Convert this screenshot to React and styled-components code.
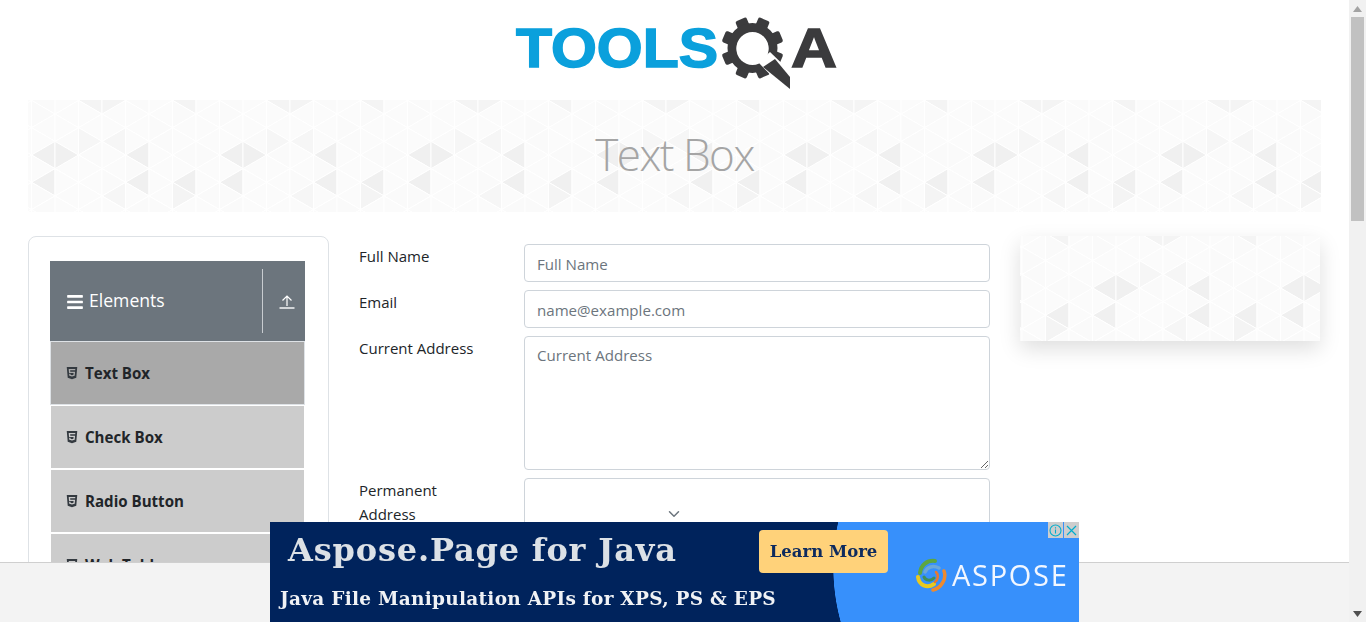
import React from "react";
import styled, { createGlobalStyle } from "styled-components";
import { FaHtml5, FaBars } from "react-icons/fa";
import { FiChevronDown } from "react-icons/fi";

const buildTile = () => {
  const W = 23.5, S = 27.3;
  const cx = (k) => 3.5 + W * k;
  const dark = { "0L55": 2, "1R55": 2, "2R41": 1, "3L41": 1, "4L55": 2, "0L82": 2, "4L82": 2, "6L82": 2, "6R96": 1.5, "3L96": 1, "6L0": 1.5, "2L0": 1.5, "3R0": 1.5 };
  const shade = { 0: "#fbfbfb", 1: "#f6f6f6", 1.5: "#f4f4f4", 2: "#f0f0f0" };
  let out = "";
  for (let k = -1; k < 8; k++) {
    const m = ((k % 8) + 8) % 8;
    const even = ((k % 2) + 2) % 2 === 0;
    for (let n = -1; n < 6; n++) {
      const yA = (even ? 0.4 : 14) + S * n;
      const yB = (even ? 14 : 0.4) + S * n;
      const keyL = `${m}L${Math.round(yA)}`;
      const keyR = `${m}R${Math.round(yB)}`;
      const tone = (m * 3 + n * 5) % 4 === 0 ? "#fafafa" : shade[0];
      const fL = dark[keyL] ? shade[dark[keyL]] : tone;
      const fR = dark[keyR] ? shade[dark[keyR]] : ((m + n) % 3 === 0 ? "#fafafa" : shade[0]);
      out += `<polygon points="${cx(k)},${yA} ${cx(k + 1)},${yA - S / 2} ${cx(k + 1)},${yA + S / 2}" fill="${fL}" stroke="#fff" stroke-width="1"/>`;
      out += `<polygon points="${cx(k + 1)},${yB} ${cx(k)},${yB - S / 2} ${cx(k)},${yB + S / 2}" fill="${fR}" stroke="#fff" stroke-width="1"/>`;
    }
  }
  return `data:image/svg+xml,${encodeURIComponent(`<svg xmlns="http://www.w3.org/2000/svg" width="188" height="112" viewBox="0 0 188 112">${out}</svg>`)}`;
};
const tile = buildTile();

const Global = createGlobalStyle`
  html, body { margin: 0; padding: 0; height: 100%; overflow: hidden; background: #fff; }
  body { font-family: "Open Sans", "Liberation Sans", sans-serif; color: #212529; }
  * { box-sizing: border-box; }
`;

const Page = styled.div`
  width: 1349px;
  height: 622px;
  overflow: hidden;
`;
const LogoRow = styled.header`
  height: 100px;
  display: flex;
  justify-content: center;
`;
const Hero = styled.div`
  height: 112px;
  margin: 0 28px;
  background: #fff url("${tile}") repeat-x 0 0;
  display: flex;
  align-items: center;
  justify-content: center;
  padding-bottom: 5px;
`;
const HeroTitle = styled.h1`
  margin: 0;
  font-size: 44px;
  font-weight: 300;
  letter-spacing: -1.5px;
  color: #a5a5a5;
  line-height: 1;
`;
const Main = styled.main`
  margin: 24px 28px 0;
  display: flex;
  gap: 30px;
  align-items: flex-start;
`;
const SideCard = styled.aside`
  width: 301px;
  flex: none;
  height: 500px;
  padding: 24px 23px 24px 21px;
  border: 1px solid #dee2e6;
  border-radius: 8px;
`;
const GroupHeader = styled.div`
  height: 80px;
  background: #6c757d;
  color: #fff;
  display: flex;
  align-items: center;
  padding: 0 10px 0 16px;
`;
const GroupTitle = styled.div`
  flex: 1;
  display: flex;
  align-items: center;
  gap: 5px;
  font-size: 17.6px;
  margin-top: -2px;
  svg { margin-top: 3px; }
`;
const Divider = styled.div`
  width: 1px;
  height: 64px;
  background: #c8ccd0;
  margin-right: 16px;
  margin-top: -1px;
`;
const MenuItem = styled.div`
  height: ${(p) => (p.$active ? "64px" : "62px")};
  margin: ${(p) => (p.$active ? "0 0 1px" : "0 1px 2px")};
  background: ${(p) => (p.$active ? "#a9a9a9" : "#cccccc")};
  border: ${(p) => (p.$active ? "1px solid #dee2e6" : "none")};
  display: flex;
  align-items: center;
  gap: 6px;
  padding-left: 14px;
  font-size: 15.1px;
  font-weight: 700;
  color: #212529;
  svg { color: #343a40; }
`;
const FormCol = styled.form`
  width: 631px;
  flex: none;
  padding-top: 8px;
  display: flex;
  flex-direction: column;
  gap: 8px;
`;
const Row = styled.div`
  display: flex;
`;
const Label = styled.label`
  width: 165px;
  flex: none;
  padding-right: 30px;
  font-size: 15px;
  line-height: 24px;
`;
const Input = styled.input`
  flex: 1;
  height: 38px;
  padding: 7px 12px 5px;
  border: 1px solid #ced4da;
  border-radius: 4px;
  font: 15.1px "Open Sans", sans-serif;
  &::placeholder { color: #6c757d; opacity: 1; }
`;
const TextArea = styled.textarea`
  flex: 1;
  height: 134px;
  padding: 6px 12px;
  border: 1px solid #ced4da;
  border-radius: 4px;
  font: 15.1px/24px "Open Sans", sans-serif;
  &::placeholder { color: #6c757d; opacity: 1; }
`;
const SelectBox = styled.div`
  flex: 1;
  height: 72px;
  padding-left: 140px;
  border: 1px solid #ced4da;
  border-radius: 4px;
  display: flex;
  align-items: center;
  color: #6c757d;
`;
const SideAd = styled.div`
  width: 300px;
  height: 105px;
  flex: none;
  background: #fff url("${tile}") repeat-x 68.7px -3px;
  box-shadow: 0 8px 20px rgba(0, 0, 0, 0.13);
`;
const BottomBar = styled.div`
  position: fixed;
  left: 0;
  right: 0;
  bottom: 0;
  height: 60px;
  background: #f3f3f3;
  border-top: 1px solid #cfcfcf;
`;
const AdBanner = styled.div`
  position: fixed;
  left: 270px;
  bottom: 0;
  width: 809px;
  height: 100px;
  display: flex;
  background: radial-gradient(circle 208px at 771px 45px, #3790fb 99.7%, #00235c 100%);
`;
const AdCopy = styled.div`
  width: 489px;
  flex: none;
  font-family: "DejaVu Serif", "Liberation Serif", serif;
  font-weight: 700;
`;
const AdHeadline = styled.div`
  margin: 7px 0 0 18px;
  font-size: 32px;
  line-height: 42px;
  letter-spacing: 0.83px;
  color: #dce1e6;
  white-space: nowrap;
`;
const AdSub = styled.div`
  margin: 14px 0 0 10px;
  font-size: 18.5px;
  line-height: 28px;
  letter-spacing: 0.27px;
  color: #f0f2f5;
  white-space: nowrap;
`;
const AdButton = styled.div`
  width: 129px;
  height: 43px;
  margin-top: 8px;
  background: #ffd27a;
  border-radius: 4px;
  display: flex;
  align-items: center;
  justify-content: center;
  font: 700 16.5px "DejaVu Serif", serif;
  color: #0d2a5e;
  white-space: nowrap;
  flex: none;
`;
const AdBrand = styled.div`
  margin: 33px 0 0 28px;
  display: flex;
  align-items: center;
  gap: 4px;
  color: #f2f7ff;
  font-size: 29px;
  line-height: 40px;
  letter-spacing: 1.7px;
  height: 40px;
`;
const AdControls = styled.div`
  position: absolute;
  top: 0;
  right: 0;
  display: flex;
  gap: 1px;
  background: #3790fb;
`;
const AdControl = styled.div`
  width: 15px;
  height: 16px;
  background: #cdcdcd;
  display: flex;
  align-items: center;
  justify-content: center;
`;
const Scrollbar = styled.div`
  position: fixed;
  top: 0;
  right: 0;
  bottom: 0;
  width: 17px;
  background: #f1f1f1;
  display: flex;
  flex-direction: column;
  align-items: center;
`;
const ScrollArrow = styled.div`
  height: 17px;
  width: 17px;
  flex: none;
  display: flex;
  align-items: center;
  justify-content: center;
  margin-top: ${(p) => (p.$bottom ? "auto" : "0")};
`;
const ScrollThumb = styled.div`
  width: 13px;
  height: 204px;
  background: #c1c1c1;
`;

const Logo = () => (
  <svg width="325" height="100" viewBox="0 0 325 100">
    <g fontFamily="'Liberation Sans', sans-serif" fontWeight="700" fontSize="55">
      <text x="4" y="67" fill="#0ba0dc" stroke="#0ba0dc" strokeWidth="1.5" textLength="202" lengthAdjust="spacingAndGlyphs">TOOLS</text>
      <text x="279" y="67" fill="#3b3b3d" stroke="#3b3b3d" strokeWidth="1.5" textLength="46" lengthAdjust="spacingAndGlyphs">A</text>
    </g>
    <g transform="translate(240.5 48)" fill="#3b3b3d">
      {[0, 45, 90, 135, 180, 225, 270, 315].map((a) => (
        <rect key={a} x="-6" y="-31" width="12" height="12" rx="2" transform={`rotate(${a + 22.5})`} />
      ))}
      <circle r="20.5" fill="none" stroke="#3b3b3d" strokeWidth="9" />
    </g>
    <circle cx="240.5" cy="49" r="16" fill="#fff" />
    <path d="M246 62 L258 52 L284 77 L284 94 L277 94 Z" fill="#fff" />
    <path d="M251 67 L263 59 L278 77 L278 89 Z" fill="#3b3b3d" />
  </svg>
);

const UploadIcon = () => (
  <svg width="16" height="16" viewBox="0 0 16 16" fill="none" stroke="#fff" strokeWidth="1.2">
    <path d="M8 13V3M3.5 7.5L8 3l4.5 4.5" />
    <path d="M0.5 15h15" strokeWidth="1.4" />
  </svg>
);

const Swirl = () => (
  <svg width="32" height="34" viewBox="0 0 32 34" fill="none" strokeLinecap="round">
    <path d="M4 15C5 7 11 2 19 3" stroke="#5da63f" strokeWidth="4" />
    <path d="M9 14C11 9 17 7 23 10" stroke="#6ca7d8" strokeWidth="3.5" />
    <path d="M2 19C3 27 11 31 18 26" stroke="#e9c91f" strokeWidth="4" />
    <path d="M8 19C10 23 15 23 18 20" stroke="#3f8f5a" strokeWidth="3" />
    <path d="M28 13C31 21 25 30 17 32" stroke="#ee8a2e" strokeWidth="3.5" />
    <path d="M20 14C23 17 22 22 19 24" stroke="#e9782d" strokeWidth="2.5" />
  </svg>
);

const menu = ["Text Box", "Check Box", "Radio Button", "Web Tables"];

export default function App() {
  return (
    <>
      <Global />
      <Page>
        <LogoRow><Logo /></LogoRow>
        <Hero><HeroTitle>Text Box</HeroTitle></Hero>
        <Main>
          <SideCard>
            <GroupHeader>
              <GroupTitle><FaBars size={18} />Elements</GroupTitle>
              <Divider />
              <UploadIcon />
            </GroupHeader>
            {menu.map((m, i) => (
              <MenuItem key={m} $active={i === 0}><FaHtml5 size={14} />{m}</MenuItem>
            ))}
          </SideCard>
          <FormCol>
            <Row><Label>Full Name</Label><Input placeholder="Full Name" /></Row>
            <Row><Label>Email</Label><Input placeholder="name@example.com" /></Row>
            <Row><Label>Current Address</Label><TextArea placeholder="Current Address" /></Row>
            <Row><Label>Permanent Address</Label><SelectBox><FiChevronDown size={18} /></SelectBox></Row>
          </FormCol>
          <SideAd />
        </Main>
      </Page>
      <BottomBar />
      <AdBanner>
        <AdCopy>
          <AdHeadline>Aspose.Page for Java</AdHeadline>
          <AdSub>Java File Manipulation APIs for XPS, PS &amp; EPS</AdSub>
        </AdCopy>
        <AdButton>Learn More</AdButton>
        <AdBrand><Swirl />ASPOSE</AdBrand>
        <AdControls>
          <AdControl>
            <svg width="13" height="13" viewBox="0 0 13 13" fill="none" stroke="#00aecd" strokeWidth="1.1">
              <circle cx="6.5" cy="6.5" r="5.5" />
              <path d="M6.5 5.5v4M6.5 3.2v1.2" />
            </svg>
          </AdControl>
          <AdControl>
            <svg width="11" height="11" viewBox="0 0 11 11" stroke="#00aecd" strokeWidth="1.2"><path d="M1 1l9 9M10 1l-9 9" /></svg>
          </AdControl>
        </AdControls>
      </AdBanner>
      <Scrollbar>
        <ScrollArrow>
          <svg width="9" height="6" viewBox="0 0 9 6"><path d="M4.5 0L9 6H0z" fill="#a3a3a3" /></svg>
        </ScrollArrow>
        <ScrollThumb />
        <ScrollArrow $bottom>
          <svg width="9" height="6" viewBox="0 0 9 6"><path d="M0 0h9L4.5 6z" fill="#505050" /></svg>
        </ScrollArrow>
      </Scrollbar>
    </>
  );
}
